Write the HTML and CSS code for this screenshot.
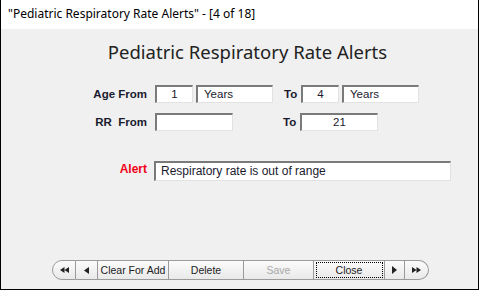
FILE: index.html
```html
<!DOCTYPE html>
<html>
<head>
<meta charset="utf-8">
<link rel="stylesheet" href="styles.css">
</head>
<body>
<div class="window">
  <div class="titlebar">"Pediatric Respiratory Rate Alerts" - [4 of 18]</div>
  <div class="content">
    <h1 class="heading">Pediatric Respiratory Rate Alerts</h1>
    <div class="form">
      <div class="row">
        <span class="label">Age From</span>
        <span class="field num">1</span>
        <span class="field unit">Years</span>
        <span class="label to">To</span>
        <span class="field num">4</span>
        <span class="field unit">Years</span>
      </div>
      <div class="row">
        <span class="label">RR&nbsp; From</span>
        <span class="field wide"></span>
        <span class="label to to-far">To</span>
        <span class="field wide center">21</span>
      </div>
      <div class="row alert-row">
        <span class="label alert">Alert</span>
        <span class="field alert-field">Respiratory rate is out of range</span>
      </div>
    </div>
    <div class="spacer"></div>
    <div class="navbar">
      <button class="nav first icon">
        <svg width="9" height="6" viewBox="0 0 9 6"><path d="M4.5 0 L0 3 L4.5 6 Z M9 0 L4.5 3 L9 6 Z" fill="#222"/></svg>
      </button>
      <button class="nav icon prev">
        <svg width="5" height="7" viewBox="0 0 5 7"><path d="M5 0 L0 3.5 L5 7 Z" fill="#222"/></svg>
      </button>
      <button class="nav clear">Clear For Add</button>
      <button class="nav del">Delete</button>
      <button class="nav save" disabled>Save</button>
      <button class="nav close"><span class="focus">Close</span></button>
      <button class="nav icon next">
        <svg width="5" height="8" viewBox="0 0 5 8"><path d="M0 0 L5 4 L0 8 Z" fill="#222"/></svg>
      </button>
      <button class="nav last icon">
        <svg width="9" height="6" viewBox="0 0 9 6"><path d="M0 0 L4.5 3 L0 6 Z M4.5 0 L9 3 L4.5 6 Z" fill="#222"/></svg>
      </button>
    </div>
  </div>
</div>
</body>
</html>
```
FILE: styles.css
```css
html, body {
  margin: 0;
  padding: 0;
  background: #f0f0f0;
}
.window {
  width: 479px;
  height: 290px;
  box-sizing: border-box;
  border: 1px solid #000;
  border-top: none;
  background: #f0f0f0;
  display: flex;
  flex-direction: column;
  overflow: hidden;
}
.titlebar {
  height: 29px;
  flex: none;
  background: #fff;
  padding-left: 7px;
  font-family: "Noto Sans", "Liberation Sans", sans-serif;
  font-size: 12px;
  line-height: 28px;
  color: #000;
  white-space: nowrap;
}
.content {
  flex: 1;
  display: flex;
  flex-direction: column;
}
.heading {
  margin: 10px 0 0 16px;
  text-align: center;
  font-family: "Noto Sans", "Open Sans", sans-serif;
  font-weight: normal;
  font-size: 18.5px;
  line-height: 25px;
  color: #222;
}
.form {
  margin-top: 21px;
  display: flex;
  flex-direction: column;
  gap: 10px;
}
.row {
  display: flex;
  align-items: center;
  height: 18px;
}
.label {
  width: 146px;
  box-sizing: border-box;
  text-align: right;
  font-family: "Liberation Sans", sans-serif;
  font-weight: bold;
  font-size: 11.5px;
  color: #1a1a2e;
  margin-right: 8px;
  flex: none;
}
.label.to {
  width: 17px;
  text-align: left;
  margin-left: 11px;
  margin-right: 0;
}
.label.to.to-far {
  margin-left: 50px;
}
.field {
  box-sizing: border-box;
  height: 18px;
  background: #fff;
  border-top: 2px solid #7a7a7a;
  border-left: 2px solid #7a7a7a;
  border-right: 1px solid #e2e2e2;
  border-bottom: 1px solid #e2e2e2;
  font-family: "Liberation Sans", sans-serif;
  font-size: 11.5px;
  line-height: 15px;
  color: #1a1a2e;
  padding-left: 6px;
  flex: none;
}
.field.num {
  width: 38px;
  text-align: center;
  padding-left: 0;
}
.field.unit {
  width: 77px;
  margin-left: 3px;
}
.field.wide {
  width: 78px;
}
.field.center {
  text-align: center;
  padding-left: 0;
}
.alert-row {
  margin-top: 20px;
  height: 20px;
}
.label.alert {
  color: #f00018;
  font-size: 12px;
  width: 146px;
  margin-right: 7px;
  position: relative;
  top: -2px;
}
.field.alert-field {
  width: 297px;
  height: 20px;
  line-height: 17px;
  font-size: 12px;
  padding-left: 5px;
}
.spacer {
  flex: 1;
}
.navbar {
  display: flex;
  margin: 0 0 9px 51px;
  height: 20px;
}
.nav {
  box-sizing: border-box;
  height: 20px;
  margin: 0;
  padding: 0;
  border: 1px solid #9a9a9a;
  border-left: none;
  background: linear-gradient(#fbfbfb, #e9e9e9);
  font-family: "Liberation Sans", sans-serif;
  font-size: 10.5px;
  color: #222;
  white-space: nowrap;
  display: flex;
  align-items: center;
  justify-content: center;
}
.nav.first {
  width: 24px;
  border-left: 1px solid #9a9a9a;
  border-radius: 10px 0 0 10px;
}
.nav.prev { width: 22px; }
.nav.clear { width: 71px; }
.nav.del { width: 75px; }
.nav.save { width: 70px; color: #a8a8a8; }
.nav.close { width: 71px; }
.nav.next { width: 20px; }
.nav.last {
  width: 24px;
  border-radius: 0 10px 10px 0;
}
.focus {
  display: block;
  box-sizing: border-box;
  width: 67px;
  height: 16px;
  line-height: 14px;
  border: 1px dotted #000;
  text-align: center;
}
```
